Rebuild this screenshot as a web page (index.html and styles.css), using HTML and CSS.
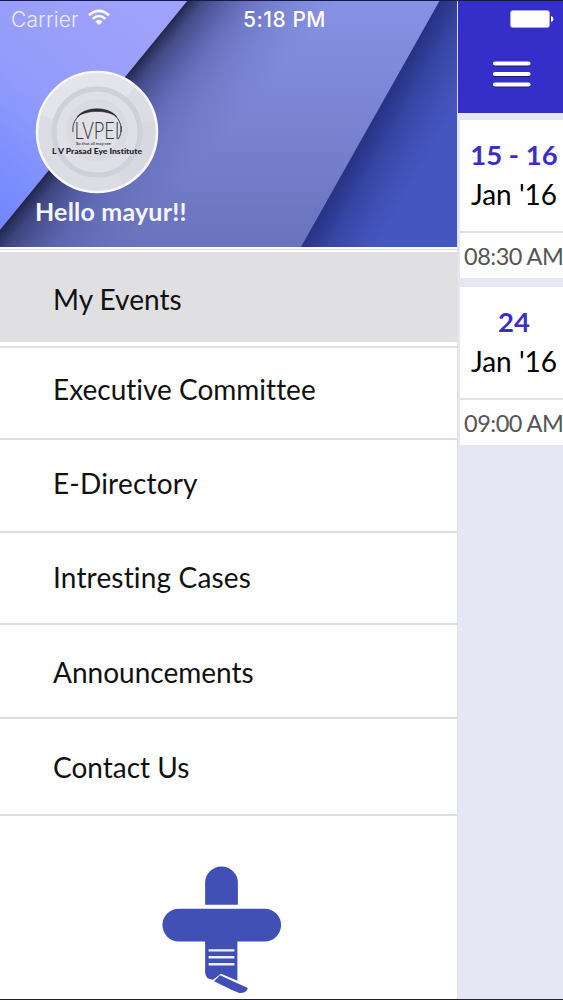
FILE: index.html
```html
<!DOCTYPE html>
<html lang="en">
<head>
    <meta charset="UTF-8">
    <meta name="viewport" content="width=device-width, initial-scale=1.0">
    <title>LVPEI</title>
    <link rel="stylesheet" href="styles.css">
</head>
<body>
    <div class="phone">
        <!-- Status bar -->
        <div class="status-bar">
            <span class="carrier">Carrier</span>
            <svg class="wifi" width="22" height="17" viewBox="0 0 22 17">
                <path d="M1 6.3Q11 -2.500 21 6.300" fill="none" stroke="#fff" stroke-width="2.600"/>
                <path d="M4.700 9.900Q11 4.200 17.300 9.900" fill="none" stroke="#fff" stroke-width="2.500"/>
                <path d="M11 16L7.300 12.400Q11 9.300 14.700 12.400Z" fill="#fff"/>
            </svg>
            <span class="time">5:18 PM</span>
            <svg class="battery" width="44" height="18" viewBox="0 0 44 18">
                <rect x="0.500" y="0.500" width="39" height="17" rx="2.500" fill="#fff" stroke="#aaa6ee"/>
                <path d="M41 6Q43.500 6.500 43.500 9T41 12Z" fill="#fff"/>
            </svg>
        </div>

        <!-- Drawer -->
        <aside class="drawer">
            <header class="profile">
                <svg class="profile-bg" width="457" height="247" viewBox="0 0 457 247">
                    <defs>
                        <linearGradient id="light" x1="0.700" y1="0" x2="0" y2="1">
                            <stop offset="0" stop-color="#a1a2fb"/>
                            <stop offset="0.500" stop-color="#929cfb"/>
                            <stop offset="1" stop-color="#6f86ff"/>
                        </linearGradient>
                        <linearGradient id="middle" x1="0" y1="0" x2="0" y2="1">
                            <stop offset="0" stop-color="#8692e4"/>
                            <stop offset="0.500" stop-color="#7a83d2"/>
                            <stop offset="1" stop-color="#6873bb"/>
                        </linearGradient>
                        <linearGradient id="fold" gradientUnits="userSpaceOnUse" x1="94" y1="115" x2="186" y2="190">
                            <stop offset="0" stop-color="#1d2146" stop-opacity="0.950"/>
                            <stop offset="0.120" stop-color="#2c3165" stop-opacity="0.720"/>
                            <stop offset="0.450" stop-color="#484f98" stop-opacity="0.380"/>
                            <stop offset="1" stop-color="#6670bd" stop-opacity="0"/>
                        </linearGradient>
                        <linearGradient id="deep" gradientUnits="userSpaceOnUse" x1="370" y1="124" x2="428" y2="157">
                            <stop offset="0" stop-color="#273282"/>
                            <stop offset="0.350" stop-color="#3644a2"/>
                            <stop offset="0.700" stop-color="#404fb4"/>
                            <stop offset="1" stop-color="#4456c0"/>
                        </linearGradient>
                    </defs>
                    <rect width="457" height="247" fill="url(#middle)"/>
                    <rect width="457" height="247" fill="url(#fold)"/>
                    <path d="M0 0H188L0 230Z" fill="url(#light)"/>
                    <path d="M440 0H457V247H301Z" fill="url(#deep)"/>
                </svg>
                <svg class="avatar" width="124" height="124" viewBox="0 0 124 124">
                    <circle cx="62" cy="62" r="60" fill="#dcdce4" stroke="#f8f9ff" stroke-width="2.500"/>
                    <path d="M62 62L5 45A60 60 0 0 1 100 17Z" fill="#e4e4eb"/>
                    <path d="M62 62L119 50A58 58 0 0 1 88 114Z" fill="#d8d8e1"/>
                    <circle cx="62" cy="62" r="43" fill="#dfdfe6" stroke="#d0d0da" stroke-width="5"/>
                    <circle cx="62" cy="60" r="31" fill="#dadae1"/>
                    <circle cx="62" cy="60" r="23" fill="#e0e0e6"/>
                    <path d="M38 62C35 32 89 32 86 62" fill="none" stroke="#3a3a40" stroke-width="1"/>
                    <path d="M42 47C50 36 74 36 82 47C74 39.500 50 39.500 42 47Z" fill="#2d2d33" stroke="#2d2d33" stroke-width="0.600"/>
                    <path d="M86 56Q87 64 83 69" fill="none" stroke="#3a3a40" stroke-width="1"/>
                    <text x="39.500" y="69" class="logo-name" textLength="45" lengthAdjust="spacingAndGlyphs">LVPEI</text>
                    <text x="41" y="74.500" class="logo-motto" textLength="35" lengthAdjust="spacingAndGlyphs">So that all may see</text>
                    <text x="17" y="83.500" class="logo-title" textLength="90" lengthAdjust="spacingAndGlyphs">L V Prasad Eye Institute</text>
                </svg>
                <div class="hello">Hello mayur!!</div>
            </header>

            <nav class="menu">
                <a class="item active">My Events</a>
                <a class="item committee">Executive Committee</a>
                <a class="item directory">E-Directory</a>
                <a class="item cases">Intresting Cases</a>
                <a class="item news">Announcements</a>
                <a class="item contact">Contact Us</a>
            </nav>

            <svg class="cross" width="122" height="134" viewBox="0 0 122 134">
                <g fill="#4050b5">
                    <path d="M44 39V17A16.500 16.500 0 0 1 77 17V39Z"/>
                    <rect x="1" y="43" width="119.500" height="33" rx="16.500"/>
                    <path d="M44 75H76.500V115.500L60 108.500L52 114.500Q44 114 44 107Z"/>
                    <path d="M59 110L87 123Q86 128 79 128Q75 127 53 116Z"/>
                </g>
                <path d="M47.500 85H73.500M47.500 92H73.500M47.500 99H73.500" stroke="#eef0ff" stroke-width="2.500"/>
            </svg>
        </aside>

        <!-- Events page, pushed to the right -->
        <main class="page">
            <div class="toolbar">
                <svg width="40" height="30" viewBox="0 0 40 30">
                    <path d="M4 4.500H37.500M4 15H37.500M4 25.500H37.500" stroke="#1c1a70" stroke-width="4" stroke-linecap="round"/>
                    <path d="M4 3.500H37.500M4 14H37.500M4 24.500H37.500" stroke="#fff" stroke-width="4.200" stroke-linecap="round"/>
                </svg>
            </div>
            <div class="card">
                <div class="date">
                    <b>15 - 16</b>
                    <span>Jan '16</span>
                </div>
                <div class="hour">08:30 AM</div>
            </div>
            <div class="card">
                <div class="date">
                    <b>24</b>
                    <span>Jan '16</span>
                </div>
                <div class="hour">09:00 AM</div>
            </div>
        </main>
    </div>
</body>
</html>
```
FILE: styles.css
```css
* {
    box-sizing: border-box;
}
body {
    margin: 0;
    font-family: Lato, sans-serif;
    font-variant-ligatures: none;
    background-color: #fff;
}
.phone {
    position: relative;
    display: flex;
    width: 563px;
    height: 1000px;
    overflow: hidden;
    border-top: 1px solid #15184a;
    border-bottom: 1px solid #222;
}
.status-bar {
    position: absolute;
    top: 0;
    left: 0;
    z-index: 2;
    display: flex;
    align-items: center;
    width: 563px;
    height: 36px;
    padding-left: 11px;
    color: #fff;
    font-family: Inter, sans-serif;
    font-size: 21px;
}
.carrier {
    width: 77px;
    color: #e9ecff;
    font-weight: 300;
    letter-spacing: 0.1px;
}
.wifi {
    margin-top: -3px;
}
.time {
    width: 84px;
    margin-left: 133px;
    font-weight: 500;
    letter-spacing: 0.5px;
    white-space: nowrap;
}
.battery {
    margin-left: 183px;
}
.drawer {
    display: flex;
    flex-direction: column;
    align-items: center;
    width: 458px;
    height: 998px;
    border-right: 1px solid #e0e1e8;
}
.profile {
    position: relative;
    width: 457px;
    height: 246px;
    padding: 69px 0 0 35px;
    flex-shrink: 0;
}
.profile-bg {
    position: absolute;
    top: -1px;
    left: 0;
}
.avatar {
    position: relative;
    display: block;
}
.logo-name {
    font-family: Lato, sans-serif;
    font-size: 24px;
    font-weight: 300;
    fill: #333338;
}
.logo-motto {
    font-family: Lato, sans-serif;
    font-size: 4px;
    font-weight: bold;
    fill: #444;
}
.logo-title {
    font-family: Lato, sans-serif;
    font-size: 8px;
    font-weight: 900;
    fill: #222228;
}
.hello {
    position: relative;
    margin-top: 2px;
    color: #f3f5ff;
    font-size: 25px;
    font-weight: bold;
    letter-spacing: 0.2px;
    line-height: 30px;
}
.menu {
    width: 100%;
    padding-top: 5px;
    background: linear-gradient(#fff 2px, #dadae0 2px, #dadae0 3px, #fff 3px);
}
.item {
    display: flex;
    align-items: center;
    height: 93px;
    padding-left: 53px;
    border-bottom: 2px solid #dedde1;
    color: #111;
    font-size: 28px;
}
.active {
    height: 96px;
    background: linear-gradient(#e0dfe1 90px, #fff 90px);
}
.committee {
    height: 92px;
    padding-bottom: 8px;
}
.directory {
    padding-bottom: 6px;
    letter-spacing: 0.2px;
}
.cases {
    height: 92px;
    padding-bottom: 2px;
    letter-spacing: 0.17px;
}
.news {
    height: 94px;
    padding-top: 2px;
}
.contact {
    height: 97px;
    padding-top: 1px;
}
.cross {
    margin: 50px 13px 0 0;
}
.page {
    width: 105px;
    height: 998px;
    background-color: #e5e7f4;
}
.toolbar {
    display: flex;
    align-items: flex-end;
    height: 112px;
    margin-bottom: 7px;
    padding: 0 0 23px 33px;
    background-color: #352ec9;
}
.card {
    width: 103px;
    height: 158px;
    margin: 0 0 9px 2px;
    background-color: #fff;
    overflow: hidden;
}
.date {
    display: flex;
    flex-direction: column;
    align-items: center;
    height: 113px;
    padding: 16px 0 0 5px;
    border-bottom: 2px solid #e2e2e5;
    font-size: 28px;
    line-height: 38.5px;
    white-space: nowrap;
}
.date b {
    color: #392fc3;
    font-size: 27.5px;
}
.hour {
    padding-left: 4px;
    color: #555;
    font-size: 23.5px;
    letter-spacing: -0.5px;
    line-height: 46px;
    white-space: nowrap;
}
```
